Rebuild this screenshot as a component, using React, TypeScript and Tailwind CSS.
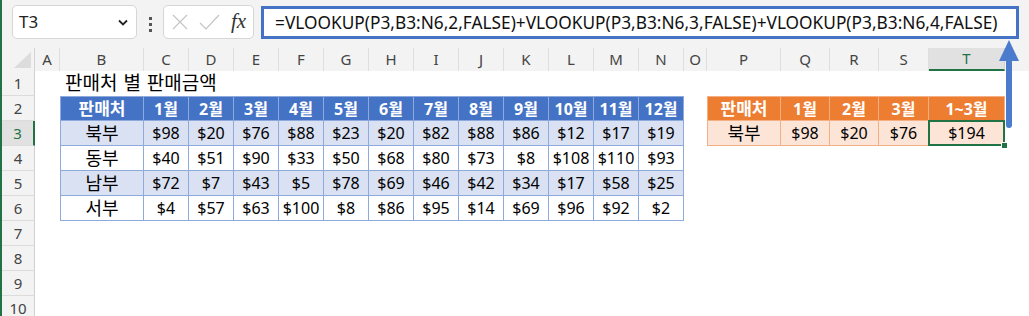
import React from 'react';

const FONT = { fontFamily: '"Noto Sans", "Noto Sans CJK KR", sans-serif' };

type Col = { key: string; w: string };

const COLS: Col[] = [
  { key: 'A', w: 'w-[25px]' },
  { key: 'B', w: 'w-[84px]' },
  { key: 'C', w: 'w-[45px]' },
  { key: 'D', w: 'w-[45px]' },
  { key: 'E', w: 'w-[45px]' },
  { key: 'F', w: 'w-[45px]' },
  { key: 'G', w: 'w-[45px]' },
  { key: 'H', w: 'w-[45px]' },
  { key: 'I', w: 'w-[45px]' },
  { key: 'J', w: 'w-[45px]' },
  { key: 'K', w: 'w-[45px]' },
  { key: 'L', w: 'w-[45px]' },
  { key: 'M', w: 'w-[45px]' },
  { key: 'N', w: 'w-[45px]' },
  { key: 'O', w: 'w-[23px]' },
  { key: 'P', w: 'w-[74px]' },
  { key: 'Q', w: 'w-[49px]' },
  { key: 'R', w: 'w-[49px]' },
  { key: 'S', w: 'w-[50px]' },
  { key: 'T', w: 'w-[76px]' },
  { key: '', w: 'w-[60px]' },
];

const MONTHS = ['1월', '2월', '3월', '4월', '5월', '6월', '7월', '8월', '9월', '10월', '11월', '12월'];

const SALES: [string, number[]][] = [
  ['북부', [98, 20, 76, 88, 23, 20, 82, 88, 86, 12, 17, 19]],
  ['동부', [40, 51, 90, 33, 50, 68, 80, 73, 8, 108, 110, 93]],
  ['남부', [72, 7, 43, 5, 78, 69, 46, 42, 34, 17, 58, 25]],
  ['서부', [4, 57, 63, 100, 8, 86, 95, 14, 69, 96, 92, 2]],
];

const SUMMARY_HEAD = ['판매처', '1월', '2월', '3월', '1~3월'];
const SUMMARY_ROW = ['북부', '$98', '$20', '$76', '$194'];

type CellSpec = { text?: string; cls?: string };

// what sits in each cell of the visible sheet
function cellFor(row: number, col: number): CellSpec {
  // blue table B2:N6 -> cols 1..13
  if (row >= 2 && row <= 6 && col >= 1 && col <= 13) {
    const edge = `border-r border-b border-[#8EA9DB] ${col === 1 ? 'border-l' : ''} ${row === 2 ? 'border-t' : ''}`;
    if (row === 2) {
      return {
        text: col === 1 ? '판매처' : MONTHS[col - 2],
        cls: `${edge} bg-[#4472C4] font-bold text-white justify-center ${col === 1 ? 'text-[17px]' : 'text-[16px]'}`,
      };
    }
    const [name, vals] = SALES[row - 3];
    const band = row % 2 === 1 ? 'bg-[#D9E1F2]' : 'bg-white';
    return {
      text: col === 1 ? name : `$${vals[col - 2]}`,
      cls: `${edge} ${band} justify-center text-black ${col === 1 ? 'text-[18px]' : 'text-[16px]'}`,
    };
  }
  // orange table P2:T3 -> cols 15..19
  if ((row === 2 || row === 3) && col >= 15 && col <= 19) {
    const edge = `border-r border-b border-[#F4B084] ${col === 15 ? 'border-l' : ''} ${row === 2 ? 'border-t' : ''}`;
    const size = col === 15 ? (row === 2 ? 'text-[17px]' : 'text-[18px]') : 'text-[16px]';
    if (row === 2) {
      return { text: SUMMARY_HEAD[col - 15], cls: `${edge} ${size} bg-[#ED7D31] font-bold text-white justify-center` };
    }
    return { text: SUMMARY_ROW[col - 15], cls: `${edge} ${size} bg-[#FCE4D6] justify-center text-black` };
  }
  if (row === 1 && col === 1) {
    return {
      text: '판매처 별 판매금액',
      cls: 'pl-[5px] text-[19px] [word-spacing:1px] whitespace-nowrap overflow-visible z-10',
    };
  }
  return { cls: 'text-[16px]' };
}

const Dots = () => (
  <div className="flex w-[26px] flex-col items-center gap-[3px] pt-[12px]">
    <span className="h-[3px] w-[3px] bg-[#555]" />
    <span className="h-[3px] w-[3px] bg-[#555]" />
    <span className="h-[3px] w-[3px] bg-[#555]" />
  </div>
);

const FormulaBar = () => (
  <div className="flex h-[48px] items-start bg-[#f3f3f3] pt-[5px]">
    <div className="ml-[10px] flex h-[34px] w-[125px] shrink-0 items-center justify-between rounded-[5px] border border-[#d6d6d6] bg-white pl-[6px] pr-[8px]">
      <span className="text-[17px] text-[#222]">T3</span>
      <svg width="10" height="7" viewBox="0 0 10 7">
        <path d="M1 1.5 L5 5.5 L9 1.5" fill="none" stroke="#222" strokeWidth="1.8" />
      </svg>
    </div>
    <Dots />
    <div className="flex h-[34px] w-[91px] shrink-0 items-center rounded-[5px] border border-[#d6d6d6] bg-white pl-[7px]">
      <svg width="18" height="16" viewBox="0 0 18 16">
        <path d="M2 1 L16 15 M16 1 L2 15" stroke="#c4c4c4" strokeWidth="1.2" fill="none" />
      </svg>
      <svg className="ml-[10px]" width="21" height="16" viewBox="0 0 21 16">
        <path d="M1 9 L7 15 L20 1" stroke="#c4c4c4" strokeWidth="1.2" fill="none" />
      </svg>
      <span
        className="ml-[11px] text-[21px] italic text-[#333]"
        style={{ fontFamily: '"Liberation Serif", serif' }}
      >
        fx
      </span>
    </div>
    <div className="ml-[7px] mt-[1px] flex h-[33px] w-[758px] shrink-0 items-center border-[3px] border-[#4472C4] bg-white pl-[11px]">
      <span className="whitespace-nowrap text-[17.3px] text-[#111]">
        =VLOOKUP(P3,B3:N6,2,FALSE)+VLOOKUP(P3,B3:N6,3,FALSE)+VLOOKUP(P3,B3:N6,4,FALSE)
      </span>
    </div>
  </div>
);

const ColumnHeaders = () => (
  <div className="flex h-[23px] bg-[#f3f3f3]">
    <div className="relative w-[33px] shrink-0 border-r border-[#d4d4d4]">
      <svg className="absolute right-[3px] bottom-[3px]" width="17" height="16" viewBox="0 0 17 16">
        <path d="M17 0 L17 16 L0 16 Z" fill="#dcdcdc" />
      </svg>
    </div>
    {COLS.map((c) => (
      <div
        key={c.key || 'rest'}
        className={`${c.w} flex shrink-0 items-center justify-center border-r text-[15px] ${
          c.key === 'T'
            ? 'border-[#d4d4d4] border-b-2 border-b-[#217346] bg-[#e1e1e1] text-[#217346]'
            : 'border-[#dedede] text-[#444]'
        }`}
      >
        {c.key}
      </div>
    ))}
  </div>
);

const Sheet = () => {
  const rows = [1, 2, 3, 4, 5, 6, 7, 8, 9, 10];
  return (
    <div>
      {rows.map((r) => (
        <div key={r} className="flex h-[25px]">
          <div
            className={`flex w-[33px] shrink-0 items-center justify-center border-b border-[#dcdcdc] text-[15px] ${
              r === 3
                ? 'border-r-2 border-r-[#217346] bg-[#e1e1e1] text-[#217346]'
                : 'border-r border-r-[#d0d0d0] bg-[#f3f3f3] text-[#444]'
            }`}
          >
            {r}
          </div>
          {COLS.map((c, ci) => {
            const spec = cellFor(r, ci);
            const selected = r === 3 && c.key === 'T';
            return (
              <div
                key={c.key || 'rest'}
                className={`${c.w} relative flex shrink-0 items-center ${spec.cls ?? ''}`}
              >
                {spec.text}
                {selected && (
                  <>
                    <div className="pointer-events-none absolute -left-px -top-px -right-px -bottom-px border-2 border-[#217346]" />
                    <div className="absolute -right-[4px] -bottom-[4px] h-[7px] w-[7px] border border-white bg-[#217346]" />
                  </>
                )}
              </div>
            );
          })}
        </div>
      ))}
    </div>
  );
};

export default function App() {
  return (
    <div className="relative h-[316px] w-[1029px] overflow-hidden border-l-2 border-[#217346] bg-white" style={FONT}>
      <FormulaBar />
      <ColumnHeaders />
      <Sheet />
      {/* arrow from the selected cell up to the formula */}
      <svg className="absolute left-[990px] top-[38px]" width="30" height="95" viewBox="0 0 30 95">
        <rect x="14" y="18" width="6" height="72" rx="3" fill="#4a7bcc" />
        <path d="M7 23 L17 2 L27 23 Z" fill="#4a7bcc" />
      </svg>
    </div>
  );
}
